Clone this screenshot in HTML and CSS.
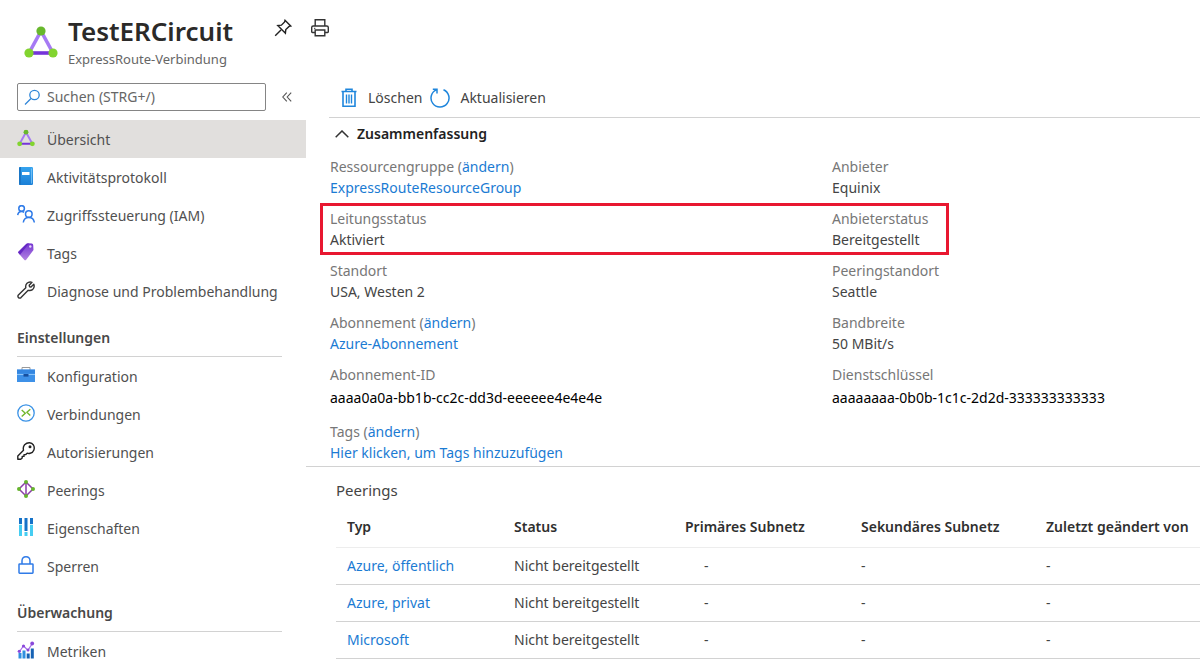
FILE: index.html
```html
<!DOCTYPE html>
<html lang="de">
<head>
<meta charset="utf-8">
<meta name="viewport" content="width=device-width, initial-scale=1">
<title>TestERCircuit</title>
<link rel="stylesheet" href="styles.css">
</head>
<body>
<svg class="defs" aria-hidden="true">
  <defs>
    <linearGradient id="book" x1="0" y1="0" x2="0" y2="1"><stop offset="0" stop-color="#35a3ee"/><stop offset="1" stop-color="#1b7fd6"/></linearGradient>
    <linearGradient id="tag" x1="0" y1="0" x2="0" y2="1"><stop offset="0" stop-color="#7434d2"/><stop offset="1" stop-color="#b283e0"/></linearGradient>
    <symbol id="circuit" viewBox="0 0 34 32">
      <path d="M17 5 5 27" stroke="#a67af4" stroke-width="3.6"/>
      <path d="M17 5 29 27" stroke="#a67af4" stroke-width="3.6"/>
      <path d="M5 27H29" stroke="#7535d9" stroke-width="3.6"/>
      <circle cx="17" cy="5" r="4.6" fill="#68b82c"/><circle cx="5" cy="27" r="4.6" fill="#82d42f"/><circle cx="29" cy="27" r="4.6" fill="#82d42f"/>
    </symbol>
  </defs>
</svg>

<header class="header">
  <svg class="header-logo"><use href="#circuit"/></svg>
  <div class="header-titles">
    <h1>TestERCircuit</h1>
    <p>ExpressRoute-Verbindung</p>
  </div>
  <div class="header-actions">
    <button type="button" aria-label="Anheften"><svg width="18" height="18" viewBox="0 0 18 18" fill="none" stroke="#222" stroke-width="1.4"><path d="M11 1.3 16.7 7l-1.6.4-3.3 3.2-.4 3.6L3.8 6.6l3.6-.4 3.2-3.3zM7 11 1.2 16.8"/></svg></button>
    <button type="button" aria-label="Drucken"><svg width="20" height="20" viewBox="0 0 20 20" fill="none" stroke="#333" stroke-width="1.4"><path d="M5.2 8V1.8h9.6V8M5 14.5H2.4Q1.7 14.5 1.7 13.8V9.5Q1.7 8 3.2 8h13.6q1.5 0 1.5 1.500v4.300q0 .7-.7.7H15M5.200 12h9.600v5.800H5.200z"/><path d="M4 10.300h1.400" stroke-width="1"/></svg></button>
  </div>
</header>

<div class="layout">
  <aside class="sidebar">
    <div class="search-row">
      <div class="search">
        <svg width="17" height="17" viewBox="0 0 17 17" fill="none" stroke="#2f86d8" stroke-width="1.3"><circle cx="10.5" cy="6" r="4.700"/><path d="M7 9.500 1 15.500"/></svg>
        <input type="text" placeholder="Suchen (STRG+/)" aria-label="Suchen">
      </div>
      <button type="button" class="collapse" aria-label="Menü einklappen"><svg width="10" height="10" viewBox="0 0 10 10" fill="none" stroke="#555" stroke-width="1.1"><path d="M4.800.6.8 5l4 4.400M9.200.6l-4 4.400 4 4.400"/></svg></button>
    </div>
    <nav class="nav">
      <a href="#" class="nav-item active"><svg viewBox="0 0 34 34"><use href="#circuit" y="1" width="34" height="32"/></svg>Übersicht</a>
      <a href="#" class="nav-item"><svg viewBox="0 0 18 18"><rect x="2" y="0" width="14" height="18" rx="1.2" fill="url(#book)"/><path d="M2 1.200Q2 0 3.200 0H4v18H3.200Q2 18 2 16.800z" fill="#1a76c6"/><rect x="5" y="5" width="7.500" height="3" fill="#fff"/><path d="M14.600 1.500v15" stroke="#8accf8" stroke-width=".8"/></svg>Aktivitätsprotokoll</a>
      <a href="#" class="nav-item"><svg viewBox="0 0 18 18" fill="none" stroke="#2f7be8" stroke-width="1.5"><circle cx="4.600" cy="3.500" r="2.800"/><path d="M.7 10.200Q1.200 6.500 4.600 6.500q1.500 0 2.500.8"/><circle cx="11.800" cy="9" r="3.300"/><path d="M6.300 17.500q.6-5 5.500-5t5.500 5"/></svg>Zugriffssteuerung (IAM)</a>
      <a href="#" class="nav-item"><svg viewBox="0 0 18 18"><path d="M1.500 8.500 9.200 1Q10 .2 11.200.3l3.600.3q1.300.2 1.400 1.500L16.500 7 9 17Q8 17.700 7.200 16.700L1.300 10Q.7 9.200 1.500 8.500z" fill="url(#tag)"/><path d="M1 9.200 9.600.8 12 .5 3 11.700z" fill="#6528c4"/><circle cx="13.300" cy="3.500" r="1.200" fill="#e6d8fa"/></svg>Tags</a>
      <a href="#" class="nav-item"><svg viewBox="0 0 18 18" fill="none" stroke="#333" stroke-width="1.400" stroke-linejoin="round"><path d="M15 1.300 12.200 4.200l.3 1.500 1.500.3L16.800 3.200Q18 6.700 15.500 8.700 13.500 10 11.200 9.300L4 16.600Q2.800 17.600 1.500 16.600.4 15.200 1.400 14L8.800 6.700Q8.200 4 10 2.300 12.200.2 15 1.300z"/></svg>Diagnose und Problembehandlung</a>

      <h2>Einstellungen</h2>
      <a href="#" class="nav-item"><svg viewBox="0 0 18 18"><path d="M5 4V1.500h8V4" fill="none" stroke="#9a9a9a" stroke-width="1"/><rect y="3.600" width="18" height="12.400" fill="#3e91e8"/><path d="M0 3.600h18v3.600H0z" fill="#3486e0"/><path d="M0 8h18v1H0z" fill="#8cc5fa"/><rect x="6.500" y="8" width="5" height="2.600" fill="#164f9e"/></svg>Konfiguration</a>
      <a href="#" class="nav-item"><svg viewBox="0 0 18 18" fill="none"><circle cx="9" cy="9" r="8.200" stroke="#3a92e6" stroke-width="1.300"/><path d="m4.700 6 3.600 3.200-3.600 3.300M13.300 5.200 9.900 8.300l3.400 3.200" stroke="#72b82e" stroke-width="1.400"/></svg>Verbindungen</a>
      <a href="#" class="nav-item"><svg viewBox="0 0 18 18" fill="none" stroke="#222" stroke-width="1.400" stroke-linejoin="round"><path d="M6.500 8.200Q5.700 4.900 7.600 2.700 9.700.7 12.500.8q2.500.2 3.900 2.200 1.400 2.300.5 4.900-1 2.700-3.700 3.400-1.500.4-3-.1L8.800 12.600H7v1.800H5.200V16L3.700 17.300H.8v-3.400z"/><circle cx="13" cy="4.800" r=".8"/></svg>Autorisierungen</a>
      <a href="#" class="nav-item"><svg viewBox="0 0 18 18"><path d="M9 2 2 9l7 7 7-7zM9 2v14" fill="none" stroke="#8b3fa8" stroke-width="1.500"/><g fill="#66b52c"><circle cx="9" cy="2" r="2"/><circle cx="2" cy="9" r="2"/><circle cx="9" cy="16" r="2"/><circle cx="16" cy="9" r="2"/></g></svg>Peerings</a>
      <a href="#" class="nav-item"><svg viewBox="0 0 18 18"><path d="M2 0h3v6H2zM7.500 0h3v13h-3zM13 0h3v6h-3z" fill="#1572c8"/><path d="M2 6.800h3V18H2zM7.500 14h3v4h-3zM13 6.800h3V18h-3z" fill="#45cdf2"/></svg>Eigenschaften</a>
      <a href="#" class="nav-item"><svg viewBox="0 0 18 18" fill="none" stroke="#2f7be8" stroke-width="1.500"><rect x="2" y="8" width="14" height="9.200" rx=".6"/><path d="M5 8V4.800Q5.200.8 9 .8t4 4V8"/></svg>Sperren</a>

      <h2>Überwachung</h2>
      <a href="#" class="nav-item"><svg viewBox="0 0 18 18"><path d="M1.500 12h3v5.500h-3zM5.500 9.500h3v8h-3z" fill="#2f8fe0"/><path d="M9.700 12.500h3v5h-3zM13.800 7.500h3v10h-3z" fill="#1662b4"/><path d="m2.500 10.500 4-5.500 4.500 4.200L15 3" fill="none" stroke="#a56eea" stroke-width="1.200"/><g fill="#8a48da"><circle cx="2.300" cy="10.300" r="1.600"/><circle cx="6.500" cy="5" r="1.600"/><circle cx="11" cy="9" r="1.500"/><circle cx="15.200" cy="2.500" r="1.900"/></g></svg>Metriken</a>
    </nav>
  </aside>

  <main class="main">
    <div class="toolbar">
      <button type="button"><svg width="18" height="20" viewBox="0 0 18 20" fill="none" stroke="#1f86dc" stroke-width="1.600"><path d="M1.500 3.500h15M6 3.500V1.300h6v2.200M3 3.500V18.200h12V3.500"/><path d="M6.500 6.500v9M9 6.500v9M11.500 6.500v9" stroke-width="1.400"/></svg>Löschen</button>
      <button type="button"><svg width="20" height="20" viewBox="0 0 20 20" fill="none" stroke="#1f86dc" stroke-width="1.500"><path d="M13.500 1.700A9 9 0 1 1 6.800 1.600M2.800 1.300H7v4.200"/></svg>Aktualisieren</button>
    </div>

    <section class="summary">
      <button type="button" class="summary-toggle" aria-expanded="true"><svg width="14" height="8" viewBox="0 0 14 8" fill="none" stroke="#333" stroke-width="1.500"><path d="M.7 7.300 7 1l6.300 6.300"/></svg>Zusammenfassung</button>
      <div class="facts">
        <div class="fact-row">
          <dl><dt>Ressourcengruppe (<a href="#">ändern</a>)</dt><dd><a href="#">ExpressRouteResourceGroup</a></dd></dl>
          <dl><dt>Anbieter</dt><dd>Equinix</dd></dl>
        </div>
        <div class="fact-row highlighted">
          <dl><dt>Leitungsstatus</dt><dd>Aktiviert</dd></dl>
          <dl><dt>Anbieterstatus</dt><dd>Bereitgestellt</dd></dl>
        </div>
        <div class="fact-row">
          <dl><dt>Standort</dt><dd>USA, Westen 2</dd></dl>
          <dl><dt>Peeringstandort</dt><dd>Seattle</dd></dl>
        </div>
        <div class="fact-row">
          <dl><dt>Abonnement (<a href="#">ändern</a>)</dt><dd><a href="#">Azure-Abonnement</a></dd></dl>
          <dl><dt>Bandbreite</dt><dd>50 MBit/s</dd></dl>
        </div>
        <div class="fact-row">
          <dl><dt>Abonnement-ID</dt><dd class="id">aaaa0a0a-bb1b-cc2c-dd3d-eeeeee4e4e4e</dd></dl>
          <dl><dt>Dienstschlüssel</dt><dd class="id">aaaaaaaa-0b0b-1c1c-2d2d-333333333333</dd></dl>
        </div>
        <div class="fact-row">
          <dl><dt>Tags (<a href="#">ändern</a>)</dt><dd><a href="#">Hier klicken, um Tags hinzuzufügen</a></dd></dl>
        </div>
      </div>
    </section>

    <section class="peerings">
      <h2>Peerings</h2>
      <table>
        <thead>
          <tr><th class="type">Typ</th><th class="status">Status</th><th class="primary">Primäres Subnetz</th><th class="secondary">Sekundäres Subnetz</th><th>Zuletzt geändert von</th></tr>
        </thead>
        <tbody>
          <tr><td><a href="#">Azure, öffentlich</a></td><td>Nicht bereitgestellt</td><td class="inset">-</td><td>-</td><td>-</td></tr>
          <tr><td><a href="#">Azure, privat</a></td><td>Nicht bereitgestellt</td><td class="inset">-</td><td>-</td><td>-</td></tr>
          <tr><td><a href="#">Microsoft</a></td><td>Nicht bereitgestellt</td><td class="inset">-</td><td>-</td><td>-</td></tr>
        </tbody>
      </table>
    </section>
  </main>
</div>
</body>
</html>
```
FILE: styles.css
```css
* { box-sizing: border-box; }

body {
  margin: 0;
  background: #fff;
  color: #444;
  font: 14px/20px "Noto Sans", "Open Sans", sans-serif;
}

h1, h2, p, dl, dd { margin: 0; }

a { color: #1b7bd3; text-decoration: none; }

button {
  display: flex;
  align-items: center;
  padding: 0;
  border: 0;
  background: none;
  color: inherit;
  font: inherit;
  cursor: pointer;
}

svg { display: block; flex: none; }

.defs { position: absolute; width: 0; height: 0; }

.header {
  display: flex;
  align-items: flex-start;
  min-height: 73px;
  padding: 14px 24px 0;
}

.header-logo { width: 34px; height: 32px; margin: 12px 10px 0 0; }

.header h1 {
  color: #2b2a29;
  font-size: 26px;
  font-weight: 600;
  line-height: 35px;
}

.header p { color: #666; font-size: 13px; }

.header-actions { display: flex; gap: 18px; margin: 4px 0 0 41px; }

.layout { display: flex; align-items: flex-start; }

.sidebar { flex: 0 0 306px; }

.search-row {
  display: flex;
  align-items: center;
  gap: 16px;
  height: 47px;
  padding: 1px 0 0 17px;
}

.search {
  display: flex;
  align-items: center;
  gap: 6px;
  width: 249px;
  height: 28px;
  padding: 0 6px;
  border: 1px solid #858585;
  border-radius: 2px;
}

.search input {
  flex: 1;
  min-width: 0;
  padding: 0;
  border: 0;
  outline: 0;
  background: none;
  color: #555;
  font: inherit;
}

.search input::placeholder { color: #666; opacity: 1; }

.nav-item {
  display: flex;
  align-items: center;
  gap: 12px;
  height: 38px;
  padding: 2px 17px 0;
  color: #505050;
  white-space: nowrap;
}

.nav-item svg { width: 18px; height: 18px; margin-bottom: 4px; }

.nav-item.active { background: #e1dfdd; }

.nav h2 {
  margin: 0 24px 0 17px;
  padding: 18px 0 8px;
  border-bottom: 1px solid #d2d2d2;
  color: #484848;
  font-size: 14px;
  font-weight: 600;
  line-height: 20px;
}

.main { flex: 1; min-width: 0; }

.toolbar {
  display: flex;
  align-items: center;
  gap: 8px;
  height: 45px;
  margin-left: 23px;
  padding: 5px 0 0 11px;
  border-bottom: 1px solid #d2d2d2;
}

.toolbar button { gap: 10px; }

.summary {
  padding: 6px 24px 3px;
  border-bottom: 1px solid #d2d2d2;
}

.summary-toggle {
  gap: 8px;
  padding-left: 5px;
  color: #222;
  font-weight: 600;
}

.facts { display: grid; gap: 10px; padding-top: 12px; }

.fact-row { display: grid; grid-template-columns: 502px auto; justify-content: start; }

.fact-row dl { line-height: 21px; }

.fact-row dt { color: #777; }

.fact-row .id { padding: 2px 0 3px; color: #000; }

.highlighted {
  width: fit-content;
  margin: -5px 0 -5px -10px;
  padding: 2px 18px 2px 7px;
  border: 3px solid #e81730;
}

.peerings { padding: 13px 0 0 30px; }

.peerings h2 { font-size: 15px; font-weight: 400; line-height: 20px; }

table {
  width: 100%;
  margin-top: 8px;
  border-collapse: collapse;
  table-layout: fixed;
}

th, td {
  height: 37px;
  padding: 0;
  border-bottom: 1px solid #d2d2d2;
  text-align: left;
  white-space: nowrap;
}

th {
  height: 39px;
  border-color: #ededed;
  color: #2f2f2f;
  font-weight: 600;
}

th:first-child, td:first-child { padding-left: 11px; }

.type { width: 178px; }
.status { width: 171px; }
.primary { width: 176px; }
.secondary { width: 185px; }
td.inset { padding-left: 19px; }
```
